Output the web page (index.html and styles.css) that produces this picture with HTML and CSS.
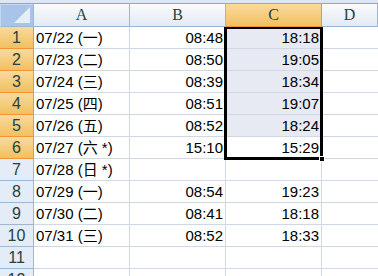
FILE: index.html
```html
<!DOCTYPE html>
<html>

<head>
    <title>Sheet1</title>
    <meta name="viewport" content="width=device-width, initial-scale=1">
    <link rel="stylesheet" href="styles.css">
</head>

<body>
    <div class="sheet">
        <div class="topStrip"></div>
        <div class="row headRow">
            <div class="corner"><span class="cornerTri"></span></div>
            <div class="colHead">A</div>
            <div class="colHead">B</div>
            <div class="colHead colSel">C</div>
            <div class="colHead colD">D</div>
        </div>

        <div class="row">
            <div class="rowHead rowSel">1</div>
            <div class="cell colA">07/22 (一)</div>
            <div class="cell num">08:48</div>
            <div class="cell num picked">18:18</div>
            <div class="cell colD"></div>
        </div>
        <div class="row">
            <div class="rowHead rowSel">2</div>
            <div class="cell colA">07/23 (二)</div>
            <div class="cell num">08:50</div>
            <div class="cell num picked">19:05</div>
            <div class="cell colD"></div>
        </div>
        <div class="row">
            <div class="rowHead rowSel">3</div>
            <div class="cell colA">07/24 (三)</div>
            <div class="cell num">08:39</div>
            <div class="cell num picked">18:34</div>
            <div class="cell colD"></div>
        </div>
        <div class="row">
            <div class="rowHead rowSel">4</div>
            <div class="cell colA">07/25 (四)</div>
            <div class="cell num">08:51</div>
            <div class="cell num picked">19:07</div>
            <div class="cell colD"></div>
        </div>
        <div class="row">
            <div class="rowHead rowSel">5</div>
            <div class="cell colA">07/26 (五)</div>
            <div class="cell num">08:52</div>
            <div class="cell num picked">18:24</div>
            <div class="cell colD"></div>
        </div>
        <div class="row">
            <div class="rowHead rowSel">6</div>
            <div class="cell colA">07/27 (六 *)</div>
            <div class="cell num">15:10</div>
            <div class="cell num">15:29</div>
            <div class="cell colD"></div>
        </div>
        <div class="row">
            <div class="rowHead">7</div>
            <div class="cell colA">07/28 (日 *)</div>
            <div class="cell num"></div>
            <div class="cell num"></div>
            <div class="cell colD"></div>
        </div>
        <div class="row">
            <div class="rowHead">8</div>
            <div class="cell colA">07/29 (一)</div>
            <div class="cell num">08:54</div>
            <div class="cell num">19:23</div>
            <div class="cell colD"></div>
        </div>
        <div class="row">
            <div class="rowHead">9</div>
            <div class="cell colA">07/30 (二)</div>
            <div class="cell num">08:41</div>
            <div class="cell num">18:18</div>
            <div class="cell colD"></div>
        </div>
        <div class="row">
            <div class="rowHead">10</div>
            <div class="cell colA">07/31 (三)</div>
            <div class="cell num">08:52</div>
            <div class="cell num">18:33</div>
            <div class="cell colD"></div>
        </div>
        <div class="row">
            <div class="rowHead">11</div>
            <div class="cell colA"></div>
            <div class="cell num"></div>
            <div class="cell num"></div>
            <div class="cell colD"></div>
        </div>
        <div class="row">
            <div class="rowHead">12</div>
            <div class="cell colA"></div>
            <div class="cell num"></div>
            <div class="cell num"></div>
            <div class="cell colD"></div>
        </div>

        <div class="selection"><span class="handle"></span></div>
    </div>
</body>

</html>
```

FILE: styles.css
```css
* {
    box-sizing: border-box
}

body {
    margin: 0;
    background: #fff;
    font-family: "Liberation Sans", "Noto Sans CJK TC", sans-serif;
    font-size: 15px;
    overflow: hidden;
}

.sheet {
    position: relative;
    width: 378px;
    height: 276px;
    overflow: hidden;
}

.topStrip {
    height: 4px;
    background: #dde7f4;
    border-bottom: 1px solid #8aa8d2;
}

.row {
    display: flex;
    height: 22px;
}

.headRow {
    height: 23px;
}

.corner,
.colHead,
.rowHead,
.cell {
    flex: none;
    border-right: 1px solid #d0d7e5;
    border-bottom: 1px solid #d0d7e5;
}

.corner {
    position: relative;
    width: 34px;
    background: #a9c4e9;
    border-right: 1px solid #9eb6ce;
    border-bottom: 1px solid #9eb6ce;
    border-top: 1px solid #c8d8ee;
    border-left: 1px solid #c8d8ee;
}

.cornerTri {
    position: absolute;
    right: 3px;
    bottom: 3px;
    width: 0;
    height: 0;
    border-left: 16px solid transparent;
    border-bottom: 16px solid #e8eef8;
}

.colHead {
    width: 96px;
    background: linear-gradient(#f9fbfd, #e3eaf4);
    border-right: 1px solid #9eb6ce;
    border-bottom: 1px solid #9eb6ce;
    color: #27413e;
    font-family: "Liberation Serif", serif;
    font-size: 16px;
    text-align: center;
    line-height: 22px;
}

.colSel {
    background: linear-gradient(#f9d99f, #f1c15f);
    border-bottom: 1px solid #f29436;
    border-right: 1px solid #f29436;
}

.colD {
    width: 56px;
}

.rowHead {
    width: 34px;
    background: #e4ecf7;
    border-right: 1px solid #9eb6ce;
    border-bottom: 1px solid #9eb6ce;
    color: #27413e;
    text-align: center;
    line-height: 21px;
    font-size: 16px;
}

.rowSel {
    background: linear-gradient(#f9d99f, #f1c15f);
    border-right: 1px solid #f29436;
    border-bottom: 1px solid #f29436;
}

.cell {
    width: 96px;
    line-height: 21px;
    padding: 0 2px;
    white-space: nowrap;
    color: #000;
}

.num {
    text-align: right;
}

.picked {
    background: #e7e9f3;
}

.selection {
    position: absolute;
    left: 224px;
    top: 27px;
    width: 99px;
    height: 133px;
    border: 3px solid #000;
    border-top-width: 2px;
}

.handle {
    position: absolute;
    right: -5px;
    bottom: -5px;
    width: 6px;
    height: 6px;
    background: #000;
    border: 1px solid #fff;
}
```
